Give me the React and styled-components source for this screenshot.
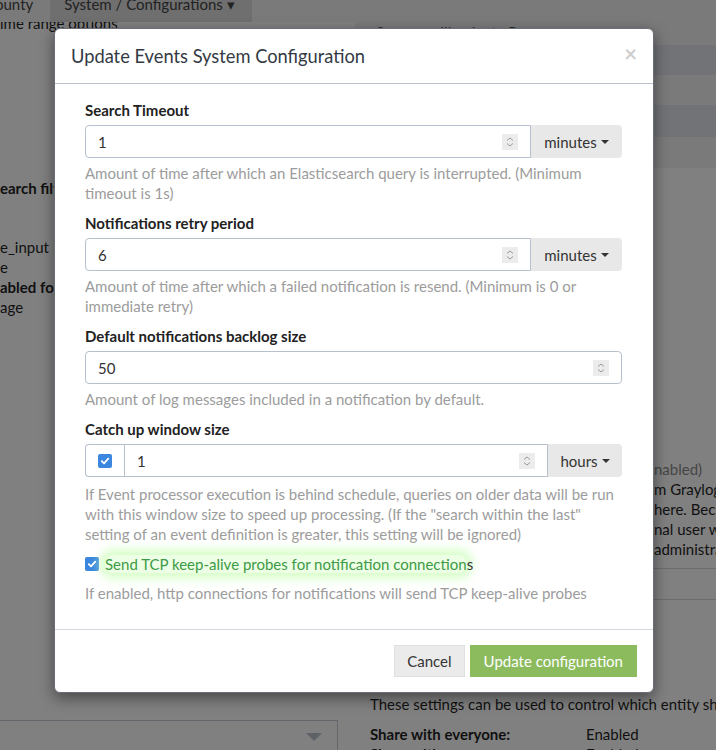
import React from "react";
import styled, { createGlobalStyle } from "styled-components";

/* the page behind the modal is drawn already dimmed (as under a 50% black backdrop) */
const GlobalStyle = createGlobalStyle`
  html, body {
    margin: 0;
    padding: 0;
    width: 716px;
    height: 750px;
    overflow: hidden;
    background-color: #808080;
    font-family: Lato, "Liberation Sans", sans-serif;
    font-size: 15px;
    color: #101010;
  }
  * { box-sizing: border-box; }
`;

const Root = styled.div`
  position: relative;
  width: 716px;
  height: 750px;
  overflow: hidden;
  background-color: #808080;
`;

/* ---------- page behind the modal ---------- */

const Page = styled.div`
  width: 716px;
  height: 750px;
  display: flex;
  flex-direction: column;
  background-color: #808080;
`;

const NavBar = styled.div`
  height: 22px;
  flex: none;
  display: flex;
  background-color: #7a7a7a;
  overflow: hidden;
  position: relative;
  z-index: 1;
`;

const NavItem = styled.div`
  height: 22px;
  padding: 0 17px 0 ${(p) => (p.$active ? "14px" : "0")};
  margin-left: ${(p) => (p.$active ? "0" : "-5px")};
  background-color: ${(p) => (p.$active ? "#6f6f6f" : "transparent")};
  color: #222;
  font-size: 15px;
  line-height: 8px;
  white-space: nowrap;
`;

const Columns = styled.div`
  flex: 1;
  display: flex;
  min-height: 0;
`;

const LeftCol = styled.div`
  width: 355px;
  flex: none;
  display: flex;
  flex-direction: column;
  padding-right: 17px;
`;

const RightCol = styled.div`
  flex: 1;
  min-width: 0;
  display: flex;
  flex-direction: column;
`;

const BgLine = styled.div`
  font-size: 15px;
  line-height: 20px;
  white-space: nowrap;
  font-weight: ${(p) => (p.$bold ? 700 : 400)};
  color: ${(p) => (p.$muted ? "#454545" : "#101010")};
`;

const Spacer = styled.div`
  height: ${(p) => p.$h}px;
  flex: ${(p) => (p.$grow ? 1 : "none")};
`;

const SelectBox = styled.div`
  height: 34px;
  flex: none;
  border: 1px solid #63676c;
  border-left: none;
  display: flex;
  align-items: center;
  justify-content: flex-end;
  padding-right: 15px;
  margin-bottom: -4px;
`;

const Caret = styled.span`
  width: 0;
  height: 0;
  border-left: 8px solid transparent;
  border-right: 8px solid transparent;
  border-top: 8px solid #5e6267;
`;

const TableRow = styled.div`
  height: ${(p) => p.$h || 30}px;
  flex: none;
  display: flex;
  align-items: ${(p) => (p.$top ? "flex-start" : "center")};
  padding-left: 21px;
  background-color: ${(p) => (p.$alt ? "#717377" : "#7a7a7a")};
  font-size: 15px;
  line-height: 20px;
  color: #2a2a2a;
`;

const Cell = styled.span`
  width: ${(p) => p.$w}px;
  white-space: nowrap;
`;

const RightText = styled.div`
  margin-left: 299px;
  display: flex;
  flex-direction: column;
`;

const Rule = styled.div`
  height: 1px;
  background-color: #6c6c6c;
  margin: ${(p) => p.$m};
`;

const Settings = styled.div`
  padding-left: 15px;
  display: flex;
  flex-direction: column;
  margin-bottom: -14px;
`;

const SettingRow = styled.div`
  display: flex;
  font-size: 15px;
  line-height: 20px;
  white-space: nowrap;
`;

const SettingKey = styled.span`
  width: 216px;
  flex: none;
  font-weight: 700;
`;

/* ---------- modal ---------- */

const Layer = styled.div`
  position: absolute;
  top: 0;
  left: 0;
  z-index: 2;
  display: flex;
  align-items: flex-start;
`;

const Modal = styled.div`
  margin: 28px 0 0 54px;
  width: 600px;
  background-color: #fff;
  border: 1px solid #6a6f77;
  border-radius: 6px;
  box-shadow: 0 5px 15px rgba(0, 0, 0, 0.45);
  display: flex;
  flex-direction: column;
`;

const Header = styled.div`
  height: 55px;
  padding: 0 16px;
  display: flex;
  align-items: center;
  justify-content: space-between;
  border-bottom: 1px solid #bcc3ce;
`;

const Title = styled.h4`
  margin: 0;
  font-size: 18.3px;
  font-weight: 400;
  color: #333a44;
`;

const Close = styled.span`
  font-size: 22px;
  font-weight: 700;
  color: #cfcfcf;
  line-height: 1;
  margin-top: -4px;
`;

const Body = styled.div`
  padding: 16px 31px 26px 30px;
  display: flex;
  flex-direction: column;
`;

const Group = styled.div`
  display: flex;
  flex-direction: column;
  margin-bottom: 10px;
`;

const Label = styled.label`
  font-size: 15px;
  font-weight: 700;
  line-height: 20px;
  color: #222;
  margin-bottom: 5px;
`;

const InputGroup = styled.div`
  display: flex;
  height: 33px;
`;

const Field = styled.div`
  flex: 1;
  display: flex;
  align-items: center;
  border: 1px solid #b7c0cd;
  border-radius: ${(p) => p.$radius || "4px"};
  padding: 0 12px 0 12px;
`;

const Value = styled.input`
  flex: 1;
  min-width: 0;
  border: none;
  outline: none;
  font-family: inherit;
  font-size: 15px;
  color: #333;
  padding: 0;
  background: transparent;
`;

const Spin = styled.span`
  width: 16px;
  height: 16px;
  background-color: #ececec;
  display: flex;
  align-items: center;
  justify-content: center;
`;

const Addon = styled.div`
  width: 39px;
  border: 1px solid #b7c0cd;
  border-right: none;
  border-radius: 4px 0 0 4px;
  display: flex;
  align-items: center;
  justify-content: center;
`;

const UnitButton = styled.button`
  width: ${(p) => p.$w}px;
  border: none;
  background-color: #e8e8e8;
  font-family: inherit;
  font-size: 15px;
  color: #333;
  display: flex;
  align-items: center;
  justify-content: center;
  gap: 4px;
  padding: 0;
  border-radius: 0 4px 4px 0;
`;

const SmallCaret = styled.span`
  width: 0;
  height: 0;
  border-left: 4px solid transparent;
  border-right: 4px solid transparent;
  border-top: 4px solid #333;
`;

const Help = styled.p`
  margin: ${(p) => p.$top || 5}px 0 0;
  font-size: 15px;
  line-height: 20px;
  color: #9c9c9c;
`;

const Box = styled.span`
  width: 14px;
  height: 14px;
  border-radius: 2px;
  background-color: #3b87e0;
  display: inline-flex;
  align-items: center;
  justify-content: center;
  flex: none;
`;

const CheckRow = styled.label`
  display: flex;
  align-items: center;
  gap: 6px;
  font-size: 15px;
  line-height: 20px;
  color: #333;
`;

const Glow = styled.span`
  color: #3d9a47;
  border-radius: 10px;
  background-color: rgba(225, 255, 210, 0.6);
  box-shadow: 0 0 10px 6px rgba(200, 255, 180, 0.7);
`;

const Footer = styled.div`
  border-top: 1px solid #d4d8de;
  padding: 15px 16px 15px;
  display: flex;
  justify-content: flex-end;
  gap: 5px;
`;

const Button = styled.button`
  height: 32px;
  padding: 0 ${(p) => (p.$primary ? "13px" : "12px")};
  border: 1px solid ${(p) => (p.$primary ? "#8cbb5e" : "#e0e0e0")};
  background-color: ${(p) => (p.$primary ? "#8cbb5e" : "#ebebeb")};
  color: ${(p) => (p.$primary ? "#fff" : "#333")};
  font-family: inherit;
  font-size: 15px;
  border-radius: 0;
`;

const Tick = () => (
  <svg width="10" height="10" viewBox="0 0 10 10">
    <path d="M1.8 5.2 L4 7.3 L8.3 2.6" fill="none" stroke="#fff" strokeWidth="1.8" strokeLinecap="round" strokeLinejoin="round" />
  </svg>
);

const Spinner = () => (
  <Spin>
    <svg width="10" height="12" viewBox="0 0 10 12">
      <path d="M2 4.5 L5 2 L8 4.5 M2 7.5 L5 10 L8 7.5" fill="none" stroke="#9a9a9a" strokeWidth="1" />
    </svg>
  </Spin>
);

const NumberField = ({ value, radius }) => (
  <Field $radius={radius}>
    <Value readOnly value={value} />
    <Spinner />
  </Field>
);

export default function App() {
  return (
    <Root>
      <GlobalStyle />
      <Page>
        <NavBar>
          <NavItem>ounty</NavItem>
          <NavItem $active>System / Configurations ▾</NavItem>
        </NavBar>
        <Columns>
          <LeftCol>
            <BgLine style={{ marginTop: -9 }}>ime range options</BgLine>
            <Spacer $h={145} />
            <BgLine $bold>earch filters</BgLine>
            <Spacer $h={39} />
            <BgLine>e_input</BgLine>
            <BgLine>e</BgLine>
            <BgLine $bold>abled for</BgLine>
            <BgLine>age</BgLine>
            <Spacer $grow />
            <SelectBox>
              <Caret />
            </SelectBox>
          </LeftCol>
          <RightCol>
            <TableRow $h={23} $top>
              <Cell $w={64}>2</Cell>
              <Cell $w={200}>Illuminate Processor</Cell>
            </TableRow>
            <TableRow $alt />
            <TableRow />
            <TableRow $alt $h={32} />
            <TableRow $h={31} />
            <Spacer $h={291} />
            <RightText>
              <BgLine $muted>nabled)</BgLine>
              <BgLine>m Graylog</BgLine>
              <BgLine>here. Because</BgLine>
              <BgLine>nal user will</BgLine>
              <BgLine>administrators</BgLine>
              <Rule $m="9px 0 30px" />
              <Rule $m="0" />
            </RightText>
            <Spacer $grow />
            <Settings>
              <BgLine>These settings can be used to control which entity sharing</BgLine>
              <Spacer $h={10} />
              <SettingRow>
                <SettingKey>Share with everyone:</SettingKey>
                <span>Enabled</span>
              </SettingRow>
              <SettingRow>
                <SettingKey>Share with users:</SettingKey>
                <span>Enabled</span>
              </SettingRow>
            </Settings>
          </RightCol>
        </Columns>
      </Page>

      <Layer>
        <Modal>
          <Header>
            <Title>Update Events System Configuration</Title>
            <Close>×</Close>
          </Header>
          <Body>
            <Group>
              <Label>Search Timeout</Label>
              <InputGroup>
                <NumberField value="1" radius="4px 0 0 4px" />
                <UnitButton $w={91}>
                  minutes <SmallCaret />
                </UnitButton>
              </InputGroup>
              <Help>
                Amount of time after which an Elasticsearch query is interrupted. (Minimum timeout is 1s)
              </Help>
            </Group>
            <Group>
              <Label>Notifications retry period</Label>
              <InputGroup>
                <NumberField value="6" radius="4px 0 0 4px" />
                <UnitButton $w={91}>
                  minutes <SmallCaret />
                </UnitButton>
              </InputGroup>
              <Help>
                Amount of time after which a failed notification is resend. (Minimum is 0 or immediate retry)
              </Help>
            </Group>
            <Group>
              <Label>Default notifications backlog size</Label>
              <InputGroup>
                <NumberField value="50" />
              </InputGroup>
              <Help>Amount of log messages included in a notification by default.</Help>
            </Group>
            <Group>
              <Label>Catch up window size</Label>
              <InputGroup>
                <Addon>
                  <Box>
                    <Tick />
                  </Box>
                </Addon>
                <NumberField value="1" radius="0" />
                <UnitButton $w={74}>
                  hours <SmallCaret />
                </UnitButton>
              </InputGroup>
              <Help $top={7}>
                If Event processor execution is behind schedule, queries on older data will be run with this
                window size to speed up processing. (If the "search within the last" setting of an event
                definition is greater, this setting will be ignored)
              </Help>
            </Group>
            <CheckRow>
              <Box>
                <Tick />
              </Box>
              <span>
                <Glow>Send TCP keep-alive probes for notification connection</Glow>s
              </span>
            </CheckRow>
            <Help $top={9}>
              If enabled, http connections for notifications will send TCP keep-alive probes
            </Help>
          </Body>
          <Footer>
            <Button>Cancel</Button>
            <Button $primary>Update configuration</Button>
          </Footer>
        </Modal>
      </Layer>
    </Root>
  );
}
